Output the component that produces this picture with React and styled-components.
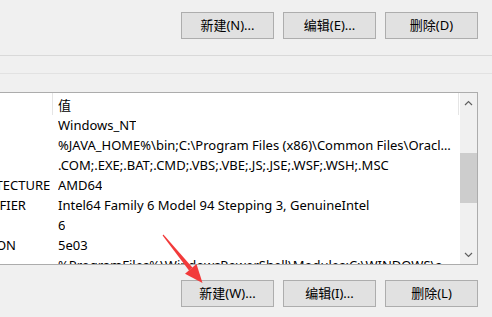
import React from "react";
import styled, { createGlobalStyle } from "styled-components";

const Global = createGlobalStyle`
  html, body { margin: 0; padding: 0; background: #f0f0f0; }
  body { font-family: "Noto Sans", "Noto Sans CJK SC", sans-serif; }
  * { box-sizing: border-box; }
`;

const Page = styled.div`
  position: relative;
  width: 492px;
  height: 317px;
  overflow: hidden;
  background: #f0f0f0;
  display: flex;
  flex-direction: column;
`;

const ButtonBar = styled.div`
  display: flex;
  justify-content: flex-end;
  align-items: flex-start;
  gap: 9px;
  padding: ${(p) => p.$pad};
  height: ${(p) => p.$h}px;
  border-bottom: ${(p) => (p.$rule ? "1px solid #d9d9d9" : "none")};
`;

const Button = styled.button`
  width: 93px;
  height: 27px;
  margin: 0;
  padding: 0;
  background: #e1e1e1;
  border: 1px solid #adadad;
  border-radius: 0;
  font-family: "Noto Sans", "Noto Sans CJK SC", sans-serif;
  font-size: 13px;
  color: #000;
  display: flex;
  align-items: center;
  justify-content: center;
  line-height: 1;
`;

const Band = styled.div`
  height: 18px;
  border-bottom: 1px solid #e2e2e2;
`;

const ListArea = styled.div`
  padding-top: 18px;
`;

const ListBox = styled.div`
  margin-left: -130px;
  margin-right: 14px;
  height: 173px;
  border: 1px solid #acacac;
  background: #fff;
  display: flex;
  overflow: hidden;
`;

const Table = styled.div`
  flex: 1;
  min-width: 0;
  display: grid;
  grid-template-columns: 182px 406px 1fr;
  grid-auto-rows: 20px;
  grid-template-rows: 22px;
  align-content: start;
  overflow: hidden;
  font-size: 13px;
  color: #000;
`;

const HeadCell = styled.div`
  display: flex;
  align-items: center;
  padding-left: ${(p) => p.$pl || 0}px;
  border-right: ${(p) => (p.$sep ? "1px solid #e5e5e5" : "none")};
  white-space: nowrap;
  overflow: hidden;
`;

const Cell = styled.div`
  grid-column: ${(p) => (p.$wide ? "2 / 3" : "auto")};
  display: flex;
  align-items: center;
  padding-left: ${(p) => p.$pl}px;
  padding-right: 4px;
  white-space: nowrap;
  overflow: hidden;
`;

const CellText = styled.span`
  overflow: hidden;
  text-overflow: ellipsis;
  white-space: nowrap;
  min-width: 0;
`;

const Filler = styled.div``;

const ScrollBar = styled.div`
  width: 17px;
  background: #f0f0f0;
  display: flex;
  flex-direction: column;
`;

const ArrowBox = styled.div`
  height: ${(p) => p.$h}px;
  display: flex;
  align-items: center;
  justify-content: center;
`;

const Track = styled.div`
  flex: 1;
  padding-top: ${(p) => p.$top}px;
`;

const Thumb = styled.div`
  height: 50px;
  background: #cdcdcd;
`;

const Overlay = styled.svg`
  position: absolute;
  left: 0;
  top: 0;
  pointer-events: none;
`;

const rows = [
  ["OS", "Windows_NT"],
  ["Path", "%JAVA_HOME%\\bin;C:\\Program Files (x86)\\Common Files\\Oracle\\Java\\javapath;C:\\WINDOWS\\system32"],
  ["PATHEXT", ".COM;.EXE;.BAT;.CMD;.VBS;.VBE;.JS;.JSE;.WSF;.WSH;.MSC"],
  ["PROCESSOR_ARCHITECTURE", "AMD64"],
  ["PROCESSOR_IDENTIFIER", "Intel64 Family 6 Model 94 Stepping 3, GenuineIntel"],
  ["PROCESSOR_LEVEL", "6"],
  ["PROCESSOR_REVISION", "5e03"],
  ["PSModulePath", "%ProgramFiles%\\WindowsPowerShell\\Modules;C:\\WINDOWS\\system32\\WindowsPowerShell\\v1.0\\Modules"],
];

const Chevron = ({ up }) => (
  <svg width="9" height="6" viewBox="0 0 9 6">
    <polyline
      points={up ? "1,5 4.5,1.5 8,5" : "1,1 4.5,4.5 8,1"}
      fill="none"
      stroke="#606060"
      strokeWidth="1.2"
    />
  </svg>
);

export default function App() {
  return (
    <Page>
      <Global />
      <ButtonBar $pad="12px 14px 0 0" $h={56} $rule>
        <Button>新建(N)...</Button>
        <Button>编辑(E)...</Button>
        <Button>删除(D)</Button>
      </ButtonBar>
      <Band />
      <ListArea>
        <ListBox>
          <Table>
            <HeadCell $pl={6} $sep>变量</HeadCell>
            <HeadCell $pl={5} $sep>值</HeadCell>
            <Filler />
            {rows.map(([name, value]) => (
              <React.Fragment key={name}>
                <Cell $pl={6}>{name}</Cell>
                <Cell $pl={5} $wide>
                  <CellText>{value}</CellText>
                </Cell>
                <Filler />
              </React.Fragment>
            ))}
          </Table>
          <ScrollBar>
            <ArrowBox $h={19}>
              <Chevron up />
            </ArrowBox>
            <Track $top={41}>
              <Thumb />
            </Track>
            <ArrowBox $h={19}>
              <Chevron />
            </ArrowBox>
          </ScrollBar>
        </ListBox>
      </ListArea>
      <ButtonBar $pad="15px 14px 0 0" $h={43}>
        <Button>新建(W)...</Button>
        <Button>编辑(I)...</Button>
        <Button>删除(L)</Button>
      </ButtonBar>
      <Overlay width="492" height="317" viewBox="0 0 492 317">
        <polygon
          points="163.4,234.6 192.4,267.6 189.0,270.4 162.6,235.4"
          fill="#f23a3a"
        />
        <polygon points="202.5,283 196.5,264 185,273.8" fill="#f23a3a" />
      </Overlay>
    </Page>
  );
}
